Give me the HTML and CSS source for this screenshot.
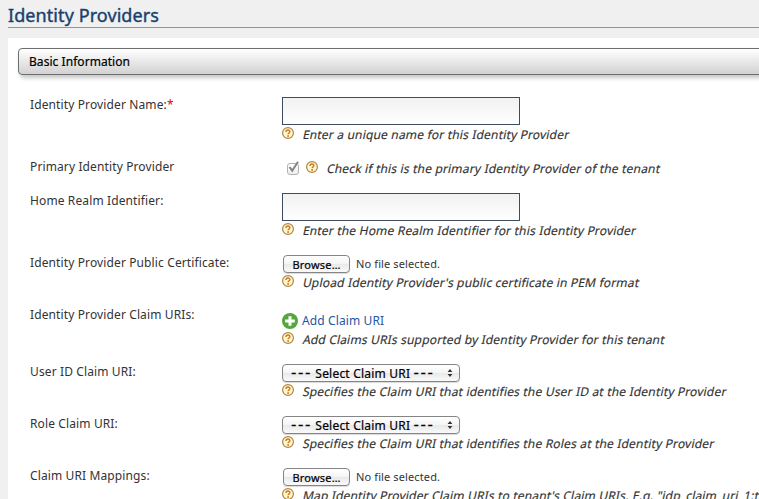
FILE: index.html
```html
<!DOCTYPE html>
<html lang="en">
<head>
<meta charset="utf-8">
<title>Identity Providers</title>
<link rel="stylesheet" href="styles.css">
</head>
<body>
<svg class="defs" width="0" height="0">
  <symbol id="help" viewBox="0 0 12 12"><circle cx="6" cy="6" r="5.4" fill="#fff6d4" stroke="#a9883c" stroke-width="1.2"/><path d="M4 4.9C4 2.4 8.1 2.5 7.9 4.7C7.8 5.9 6.1 5.8 6.1 7.3" fill="none" stroke="#d0761c" stroke-width="1.4"/><circle cx="6.1" cy="9" r=".9" fill="#d0761c"/></symbol>
  <symbol id="arrows" viewBox="0 0 6 8"><path d="M3 0L5.4 3H.6zM3 8L.6 5h4.8z" fill="#333"/></symbol>
</svg>
<h1 class="title">Identity Providers</h1>
<main class="panel">
  <h2 class="section">Basic Information</h2>
  <div class="form">
    <div class="row tall"><label>Identity Provider Name:<span class="required">*</span></label>
      <div><input class="text" type="text"><p class="help"><svg><use href="#help"/></svg><span>Enter a unique name for this Identity Provider</span></p></div></div>
    <div class="row short"><label>Primary Identity Provider</label>
      <div class="check-line"><span class="check"><svg viewBox="0 0 14 14"><path d="M3.5 6L6.2 9.7L12 .8" fill="none" stroke="#858585" stroke-width="2"/></svg></span><p class="help"><svg><use href="#help"/></svg><span>Check if this is the primary Identity Provider of the tenant</span></p></div></div>
    <div class="row tall"><label>Home Realm Identifier:</label>
      <div><input class="text" type="text"><p class="help"><svg><use href="#help"/></svg><span>Enter the Home Realm Identifier for this Identity Provider</span></p></div></div>
    <div class="row"><label>Identity Provider Public Certificate:</label>
      <div><div class="file"><button>Browse…</button><span>No file selected.</span></div><p class="help"><svg><use href="#help"/></svg><span>Upload Identity Provider's public certificate in PEM format</span></p></div></div>
    <div class="row medium"><label>Identity Provider Claim URIs:</label>
      <div><a class="add"><svg viewBox="0 0 16 16"><circle cx="8" cy="8" r="8" fill="#56a63b"/><path d="M8 3.2v9.6M3.2 8h9.6" stroke="#fff" stroke-width="3"/></svg><span>Add Claim URI</span></a><p class="help"><svg><use href="#help"/></svg><span>Add Claims URIs supported by Identity Provider for this tenant</span></p></div></div>
    <div class="row"><label>User ID Claim URI:</label>
      <div><button class="select"><span><i class="dash">---</i> Select Claim URI <i class="dash">---</i></span><svg><use href="#arrows"/></svg></button><p class="help"><svg><use href="#help"/></svg><span>Specifies the Claim URI that identifies the User ID at the Identity Provider</span></p></div></div>
    <div class="row"><label>Role Claim URI:</label>
      <div><button class="select"><span><i class="dash">---</i> Select Claim URI <i class="dash">---</i></span><svg><use href="#arrows"/></svg></button><p class="help"><svg><use href="#help"/></svg><span>Specifies the Claim URI that identifies the Roles at the Identity Provider</span></p></div></div>
    <div class="row"><label>Claim URI Mappings:</label>
      <div><div class="file"><button>Browse…</button><span>No file selected.</span></div><p class="help"><svg><use href="#help"/></svg><span>Map Identity Provider Claim URIs to tenant's Claim URIs. E.g. "idp_claim_uri_1:t</span></p></div></div>
  </div>
</main>
</body>
</html>
```
FILE: styles.css
```css
* { box-sizing: border-box; }
body { margin: 0; height: 499px; overflow: hidden; background: #f0f0f0; color: #333; font: 12px/16px "Noto Sans", sans-serif; letter-spacing: .12px; }
.defs { position: absolute; }
.title { margin: 0 0 10px 8px; height: 28px; padding-top: 4px; border-bottom: 1px solid #8297b6; color: #19416f; font-size: 18px; line-height: 22px; font-weight: 400; letter-spacing: .08px; -webkit-text-stroke: .4px #19416f; }
.panel { margin-left: 8px; height: 461px; padding: 10px 0 0 10px; background: #fff; overflow: hidden; }
.section { margin: 0 -10px 22px 0; height: 27px; padding-left: 10px; border: 1px solid #6e6e6e; border-radius: 4px; background: linear-gradient(#fff, #d2d2d2); box-shadow: 2px 3px 4px rgba(0,0,0,.22); color: #000; font-size: 12px; line-height: 25px; font-weight: 400; letter-spacing: .05px; -webkit-text-stroke: .2px #000; }
.form { padding-left: 12px; }
.row { display: grid; grid-template-columns: 252px 1fr; height: 52px; white-space: nowrap; }
.tall { height: 62px; }
.short { height: 34px; }
.medium { height: 57px; }
.required { color: #e00; }
.text { display: block; width: 238px; height: 28px; border: 1px solid #3d4b64; background: linear-gradient(#f1f1f1, #fff); padding: 2px 4px; font: inherit; outline: 0; }
.help { display: flex; align-items: center; height: 19px; margin: 0; letter-spacing: .18px; }
.help span { transform: skewX(-12deg); -webkit-text-stroke: .15px #333; }
.help svg { width: 12px; height: 12px; margin: -3px 8.6px 0 0; flex: none; }
.check-line { display: flex; align-items: center; height: 19px; padding-left: 5px; }
.check { width: 12px; height: 12px; margin-right: 7px; border: 1px solid #b2b2b2; border-radius: 3px; background: linear-gradient(#fff, #eee); }
.check svg { display: block; width: 14px; height: 14px; margin: -3px 0 0 -2px; }
.file { display: flex; align-items: center; height: 18px; font-size: 11px; }
.file button { width: 67px; height: 18px; margin: 0 6px 0 1px; padding: 0; font: 400 11px/15px "Noto Sans", sans-serif; letter-spacing: .2px; -webkit-text-stroke: .2px #000; }
.file button, .select { border: 1px solid #858585; border-radius: 4px; background: linear-gradient(#fff 0%, #f5f5f5 48%, #e9e9e9 52%, #fafafa); color: #000; box-shadow: 0 1px 1px rgba(0,0,0,.15); }
.select { display: flex; align-items: center; justify-content: space-between; width: 178px; height: 18px; padding: 0 6px 0 8px; font: 400 12px/16px "Noto Sans", sans-serif; letter-spacing: .2px; -webkit-text-stroke: .2px #000; }
.dash { font: 15px/16px "DejaVu Sans", sans-serif; letter-spacing: 1.6px; }
.select svg { width: 6px; height: 8px; }
.add { display: flex; align-items: center; height: 23px; padding-top: 4px; color: #2257a5; }
.add svg { width: 16px; height: 16px; margin-right: 4px; }
```
